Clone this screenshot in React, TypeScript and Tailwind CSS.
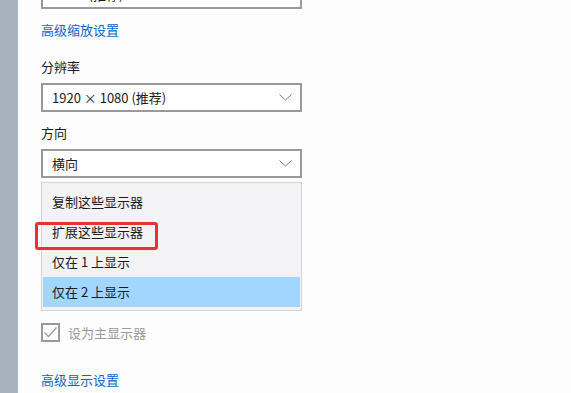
import React from "react";

const font = { fontFamily: '"Noto Sans CJK SC", "Noto Sans", sans-serif' };

function Chevron() {
  return (
    <svg width="13" height="7" viewBox="0 0 13 7" className="shrink-0">
      <path d="M0.5 0.5 L6.5 6 L12.5 0.5" fill="none" stroke="#7a7a7a" strokeWidth="1" />
    </svg>
  );
}

function Select({ value }: { value: string }) {
  return (
    <div className="flex h-[29px] w-[261px] items-center justify-between border-2 border-[#999999] bg-white pl-[9px] pr-[8px] text-[13px] text-[#1a1a1a]">
      <span>{value}</span>
      <Chevron />
    </div>
  );
}

const options = ["复制这些显示器", "扩展这些显示器", "仅在 1 上显示", "仅在 2 上显示"];

export default function App() {
  return (
    <div className="flex h-[393px] w-[571px] overflow-hidden bg-[#fdfdfd]" style={font}>
      <div className="w-[18px] shrink-0 bg-[#a8b1be]" />
      <div className="flex flex-col pl-[23px] text-[13px] text-[#1a1a1a]">
        <div className="-mt-[20px]">
          <Select value="100% (推荐)" />
        </div>

        <a className="mt-[11px] h-[20px] leading-[20px] text-[#0a66c8]">高级缩放设置</a>

        <div className="mt-[17px] h-[20px] leading-[20px]">分辨率</div>
        <div className="mt-[6px]">
          <Select value="1920 × 1080 (推荐)" />
        </div>

        <div className="mt-[11px] h-[20px] leading-[20px]">方向</div>
        <div className="mt-[6px]">
          <Select value="横向" />
        </div>

        <div className="relative mt-[4px] w-[261px] border border-[#d4d4d4] bg-[#f3f2f4] px-[1px] pb-[3px] pt-[4px]">
          {options.map((o, i) => (
            <div
              key={o}
              className={`flex h-[30px] items-center pl-[9px] ${i === 3 ? "bg-[#a3d6ff]" : ""}`}
            >
              {o}
            </div>
          ))}
          <div className="absolute left-[-7px] top-[39px] h-[28px] w-[123px] rounded-[3px] border-[3px] border-[#e8322f]" />
        </div>

        <div className="mt-[12px] flex h-[19px] items-center gap-[8px]">
          <div className="flex h-[19px] w-[19px] items-center justify-center border-2 border-[#9a9a9a]">
            <svg width="13" height="11" viewBox="0 0 13 11">
              <path d="M0.5 5.5 L4.5 9.5 L12.5 0.5" fill="none" stroke="#9a9a9a" strokeWidth="1.3" />
            </svg>
          </div>
          <span className="text-[#9a9a9a]">设为主显示器</span>
        </div>

        <a className="mt-[28px] h-[20px] leading-[20px] text-[#0a66c8]">高级显示设置</a>
      </div>
    </div>
  );
}
